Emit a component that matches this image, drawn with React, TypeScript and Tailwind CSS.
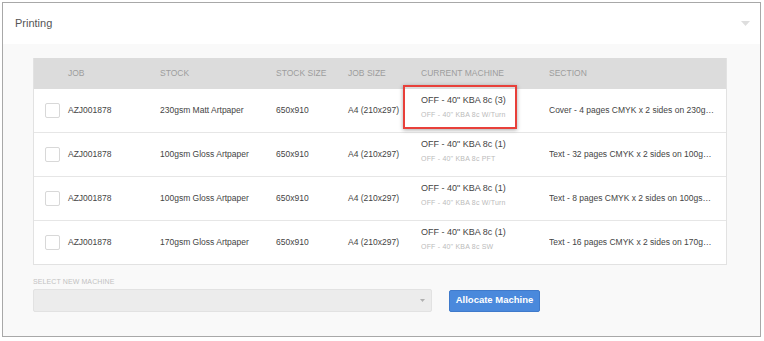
import React from "react";

const rows = [
  { job: "AZJ001878", stock: "230gsm Matt Artpaper", ss: "650x910", js: "A4 (210x297)", m1: "OFF - 40\" KBA 8c (3)", m2: "OFF - 40\" KBA 8c W/Turn", sec: "Cover - 4 pages CMYK x 2 sides on 230gsm Matt Artpaper", hl: true },
  { job: "AZJ001878", stock: "100gsm Gloss Artpaper", ss: "650x910", js: "A4 (210x297)", m1: "OFF - 40\" KBA 8c (1)", m2: "OFF - 40\" KBA 8c PFT", sec: "Text - 32 pages CMYK x 2 sides on 100gsm Gloss Artpaper" },
  { job: "AZJ001878", stock: "100gsm Gloss Artpaper", ss: "650x910", js: "A4 (210x297)", m1: "OFF - 40\" KBA 8c (1)", m2: "OFF - 40\" KBA 8c W/Turn", sec: "Text - 8 pages CMYK x 2 sides on 100gsm Gloss Artpaper" },
  { job: "AZJ001878", stock: "170gsm Gloss Artpaper", ss: "650x910", js: "A4 (210x297)", m1: "OFF - 40\" KBA 8c (1)", m2: "OFF - 40\" KBA 8c SW", sec: "Text - 16 pages CMYK x 2 sides on 170gsm Gloss Artpaper" },
];

export default function App() {
  return (
    <div className="w-[764px] h-[341px] bg-white pt-[2px] pl-[2px]" style={{ fontFamily: '"Liberation Sans", Arial, sans-serif' }}>
      <div className="w-[759px] h-[335px] border border-[#a8a8a8] bg-[#f9f9f9] flex flex-col">
        <div className="h-[41px] bg-white flex items-center justify-between pl-[12px] pr-[10px] shrink-0">
          <span className="text-[11px] text-[#555]">Printing</span>
          <svg width="9" height="5" viewBox="0 0 9 5"><path d="M0 0 L9 0 L4.5 5 Z" fill="#dedede" /></svg>
        </div>
        <div className="pl-[30px] pt-[14px]">
          <div className="w-[694px] border border-[#e2e2e2] border-t-0 bg-white">
            <div className="h-[31px] bg-[#dcdcdc] flex items-center pl-[34px] text-[8.5px] text-[#9c9c9c] uppercase">
              <div className="w-[92px]">Job</div>
              <div className="w-[116px]">Stock</div>
              <div className="w-[72px]">Stock Size</div>
              <div className="w-[73px]">Job Size</div>
              <div className="w-[128px]">Current Machine</div>
              <div className="w-[166px]">Section</div>
            </div>
            {rows.map((r, i) => (
              <div key={i} className={`relative flex items-center pl-[11px] text-[8.5px] text-[#444] ${i < rows.length - 1 ? "h-[44px] border-b border-[#e6e6e6]" : "h-[43px]"}`}>
                <div className="w-[15px] h-[15px] border-[1.5px] border-[#d8d8d8] rounded-[2px] bg-white shrink-0" />
                <div className="w-[8px] shrink-0" />
                <div className="w-[92px] shrink-0">{r.job}</div>
                <div className="w-[116px] shrink-0">{r.stock}</div>
                <div className="w-[72px] shrink-0">{r.ss}</div>
                <div className="w-[73px] shrink-0">{r.js}</div>
                <div className="w-[128px] shrink-0 flex flex-col pb-[7px]">
                  <span className="text-[9px] leading-[12px] text-[#444]">{r.m1}</span>
                  <span className="text-[7px] leading-[10px] mt-[4px] tracking-[0.2px] text-[#bbbbbb]">{r.m2}</span>
                </div>
                <div className="w-[166px] shrink-0 truncate">{r.sec}</div>
                {r.hl && (
                  <div className="absolute left-[369px] top-[-4px] w-[114px] h-[44px] border-2 border-[#e8403a] shadow-[0_1px_4px_rgba(0,0,0,0.35)] pointer-events-none" />
                )}
              </div>
            ))}
          </div>
          <div className="mt-[13px] text-[7px] tracking-[0.1px] text-[#c2c2c2] uppercase leading-[8px]">Select new machine</div>
          <div className="mt-[3px] flex items-center">
            <div className="w-[399px] h-[23px] bg-[#ececec] border border-[#e2e2e2] rounded-[2px] flex items-center justify-end pr-[6px]">
              <svg width="5" height="3" viewBox="0 0 5 3"><path d="M0 0 L5 0 L2.5 3 Z" fill="#b0b0b0" /></svg>
            </div>
            <button className="ml-[17px] w-[91px] h-[22px] bg-[#4a89dc] border border-[#3f7acb] rounded-[2px] text-white text-[9.5px] font-bold">
              Allocate Machine
            </button>
          </div>
        </div>
      </div>
    </div>
  );
}
